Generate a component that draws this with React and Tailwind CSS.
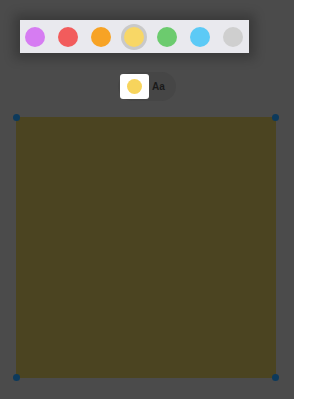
import React from "react";

const colors = ["#d67cf2", "#f25c5c", "#f7a325", "#f8d766", "#6ccb6e", "#5ccaf6", "#cfcfcf"];

export default function App() {
  return (
    <div
      className="w-[294px] h-[399px] bg-[#4b4b4b] overflow-hidden flex flex-col"
      style={{ fontFamily: '"Liberation Sans", Arial, sans-serif' }}
    >
      <div className="mt-[20px] ml-[20px] w-[229px] h-[33px] bg-[#e9e9ee] flex items-center pl-[5px] gap-[13px] shadow-[0_0_10px_6px_rgba(0,0,0,0.22)]">
        {colors.map((c, i) => (
          <div
            key={i}
            className={
              i === 3
                ? "w-[20px] h-[20px] rounded-full ring-[3px] ring-[#c9c9c9] shrink-0"
                : "w-[20px] h-[20px] rounded-full shrink-0"
            }
            style={{ backgroundColor: c }}
          />
        ))}
      </div>

      <div className="mt-[19px] ml-[118px] w-[58px] h-[29px] rounded-[15px] bg-[#464646] flex items-center">
        <div className="ml-[2px] w-[29px] h-[25px] bg-white rounded-[3px] flex items-center justify-center">
          <div className="w-[15px] h-[15px] rounded-full bg-[#f7d45c]" />
        </div>
        <span className="ml-[3px] text-[10px] font-bold text-[#1a1a1a] leading-none">Aa</span>
      </div>

      <div className="mt-[16px] ml-[16px] w-[260px] h-[261px] bg-[#4b4421] relative">
        <div className="absolute -left-[3px] -top-[3px] w-[7px] h-[7px] rounded-full bg-[#0d3a5c]" />
        <div className="absolute -right-[3px] -top-[3px] w-[7px] h-[7px] rounded-full bg-[#0d3a5c]" />
        <div className="absolute -left-[3px] -bottom-[3px] w-[7px] h-[7px] rounded-full bg-[#0d3a5c]" />
        <div className="absolute -right-[3px] -bottom-[3px] w-[7px] h-[7px] rounded-full bg-[#0d3a5c]" />
      </div>
    </div>
  );
}
